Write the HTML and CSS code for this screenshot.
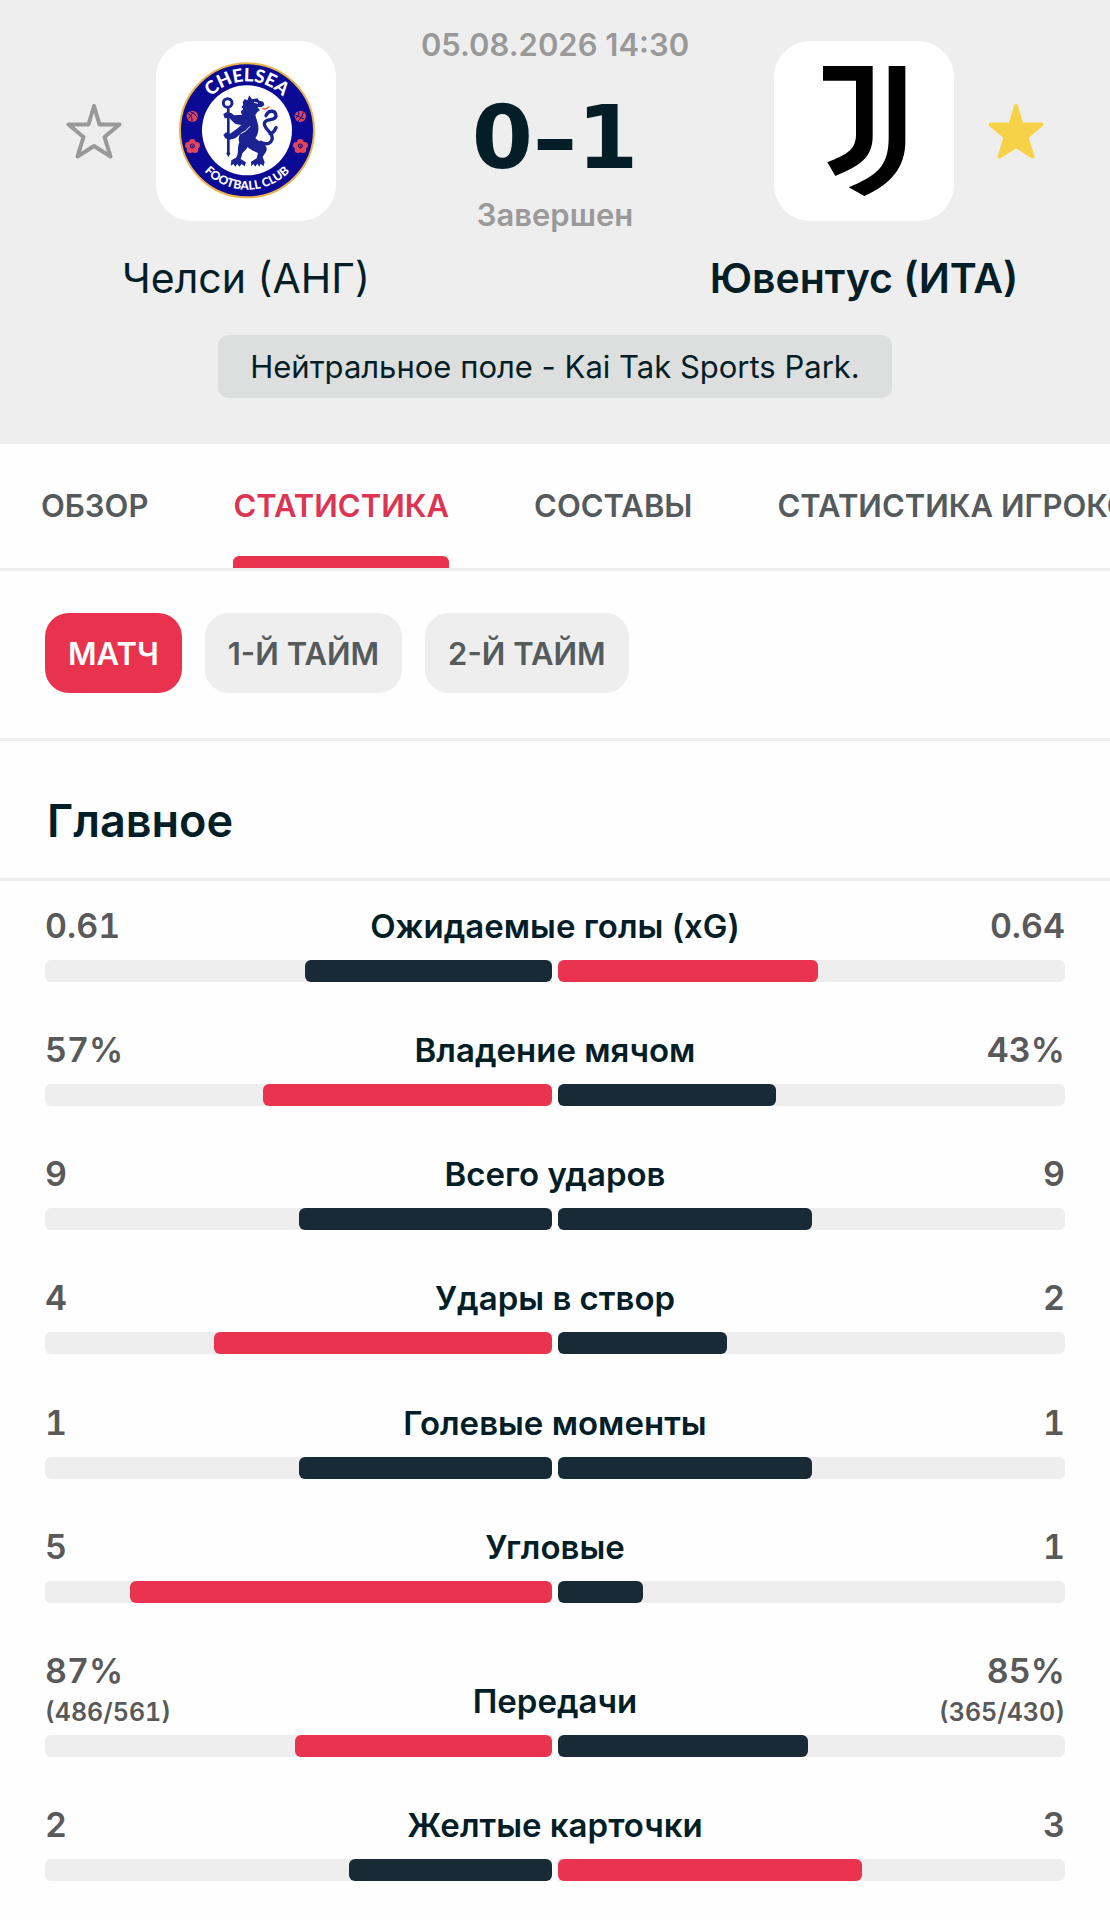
FILE: index.html
```html
<!DOCTYPE html>
<html lang="ru">
<head>
  <meta charset="UTF-8">
  <meta name="viewport" content="width=device-width, initial-scale=1.0">
  <title>Челси - Ювентус 0-1</title>
  <link rel="stylesheet" href="styles.css">
</head>
<body>
  <header class="match">
    <div class="match-row">
      <div class="team">
        <button class="star" type="button" aria-label="Добавить Челси в избранное">
          <svg viewBox="0 0 56 56"><path d="M28 3L33.5 21.5H53.5L38.5 34L44.5 53.5L28 43L11.5 53.5L17.5 34L2.5 21.5H22.5Z"/></svg>
        </button>
        <div class="logo">
          <svg viewBox="0 0 180 180">
            <defs>
              <path id="arc-top" d="M84 226A147 147 0 0 1 378 226"/>
              <path id="arc-bottom" d="M53 226A178 178 0 0 0 409 226"/>
            </defs>
            <g transform="translate(14 14) scale(.3333)">
              <circle cx="231" cy="226" r="201" fill="#0a0a94" stroke="#eab14d" stroke-width="6"/>
              <circle cx="231" cy="226" r="135" fill="#fff"/>
              <text class="crest-top"><textPath href="#arc-top" startOffset="50%">CHELSEA</textPath></text>
              <text class="crest-bottom"><textPath href="#arc-bottom" startOffset="50%">FOOTBALL CLUB</textPath></text>
              <!-- розы и мячи -->
              <g fill="#e0455c">
                <circle cx="67" cy="184" r="17"/>
                <circle cx="391" cy="184" r="17"/>
                <circle cx="67" cy="262" r="10"/><circle cx="80" cy="271" r="10"/><circle cx="75" cy="284" r="10"/><circle cx="60" cy="284" r="10"/><circle cx="55" cy="271" r="10"/>
                <circle cx="391" cy="262" r="10"/><circle cx="404" cy="271" r="10"/><circle cx="399" cy="284" r="10"/><circle cx="384" cy="284" r="10"/><circle cx="379" cy="271" r="10"/>
              </g>
              <g fill="none" stroke="#0a0a94" stroke-width="3">
                <path d="M54 176Q68 182 66 200M60 170Q76 174 82 188M56 190L70 172M378 190Q390 180 386 168M384 198Q398 188 400 172M376 180L402 192"/>
                <circle cx="67" cy="273" r="6"/>
                <circle cx="391" cy="273" r="6"/>
              </g>
              <!-- лев с посохом -->
              <g fill="#1a2391">
                <path d="M218 142L224 132L232 136L238 121L246 133L262 130L268 137L280 140L283 150L274 157L262 156L270 166L262 171L256 180L262 200C268 220 266 235 256 250L272 262C288 268 294 280 288 290L278 306L284 322L280 334L272 326L268 335L262 326L256 335L250 327L244 334L243 320L260 310L264 294L246 286L232 276C228 288 216 292 216 300L212 312L228 322L224 334L215 327L208 335L202 327L196 335L190 327L182 333L184 316L198 308C208 296 200 280 208 262C204 254 206 246 210 238L196 250L176 255L166 250L160 240L168 232L180 236L200 222L214 210L196 207L184 196L178 188L164 190L160 178L168 172L184 174L192 181L204 180L216 180L212 170L220 162L214 156L220 150Z"/>
                <path d="M171 160H179V290L181 296L175 306L169 296L171 290Z"/>
              </g>
              <path d="M272 262C300 275 312 255 304 238C298 228 278 215 284 202C292 188 312 200 318 184C318 164 296 164 288 182M300 236Q312 234 318 218" fill="none" stroke="#1a2391" stroke-width="10" stroke-linecap="round"/>
              <circle cx="173" cy="144" r="13" fill="none" stroke="#1a2391" stroke-width="9"/>
              <path d="M277 160Q288 166 298 154" fill="none" stroke="#e0552f" stroke-width="4"/>
              <path d="M252 142L264 145M212 236Q228 230 240 214" fill="none" stroke="#fff" stroke-width="3"/>
            </g>
          </svg>
        </div>
        <div class="team-name">Челси (АНГ)</div>
      </div>
      <div class="score-box">
        <div class="muted">05.08.2026 14:30</div>
        <div class="score">0–1</div>
        <div class="muted">Завершен</div>
      </div>
      <div class="team">
        <button class="star active" type="button" aria-label="Убрать Ювентус из избранного">
          <svg viewBox="0 0 56 56"><path d="M28 3L33.5 21.5H53.5L38.5 34L44.5 53.5L28 43L11.5 53.5L17.5 34L2.5 21.5H22.5Z"/></svg>
        </button>
        <div class="logo">
          <svg viewBox="0 0 540 540">
            <path d="M147 75H296V285C296 350 258 374 184 405L160 364C220 340 246 326 246 280V119H147Z"/>
            <path d="M344 75H394V300C394 380 352 428 271 465L224 439C304 404 344 380 344 290Z"/>
          </svg>
        </div>
        <div class="team-name winner">Ювентус (ИТА)</div>
      </div>
    </div>
    <p class="venue">Нейтральное поле - Kai Tak Sports Park.</p>
  </header>

  <nav class="tabs">
    <a href="#overview">ОБЗОР</a>
    <a href="#stats" class="active">СТАТИСТИКА</a>
    <a href="#lineups">СОСТАВЫ</a>
    <a href="#players">СТАТИСТИКА ИГРОКОВ</a>
  </nav>

  <div class="periods">
    <button type="button" class="active">МАТЧ</button>
    <button type="button">1-Й ТАЙМ</button>
    <button type="button">2-Й ТАЙМ</button>
  </div>

  <h2 class="section-title">Главное</h2>

  <main class="stats" id="stats">
    <div class="stat">
      <div class="stat-text"><div class="value">0.61</div><div class="label">Ожидаемые голы (xG)</div><div class="value">0.64</div></div>
      <div class="bars">
        <div class="bar home"><span style="width: 48.8%"></span></div>
        <div class="bar"><span class="best" style="width: 51.2%"></span></div>
      </div>
    </div>
    <div class="stat">
      <div class="stat-text"><div class="value">57%</div><div class="label">Владение мячом</div><div class="value">43%</div></div>
      <div class="bars">
        <div class="bar home"><span class="best" style="width: 57%"></span></div>
        <div class="bar"><span style="width: 43%"></span></div>
      </div>
    </div>
    <div class="stat">
      <div class="stat-text"><div class="value">9</div><div class="label">Всего ударов</div><div class="value">9</div></div>
      <div class="bars">
        <div class="bar home"><span style="width: 50%"></span></div>
        <div class="bar"><span style="width: 50%"></span></div>
      </div>
    </div>
    <div class="stat">
      <div class="stat-text"><div class="value">4</div><div class="label">Удары в створ</div><div class="value">2</div></div>
      <div class="bars">
        <div class="bar home"><span class="best" style="width: 66.7%"></span></div>
        <div class="bar"><span style="width: 33.3%"></span></div>
      </div>
    </div>
    <div class="stat">
      <div class="stat-text"><div class="value">1</div><div class="label">Голевые моменты</div><div class="value">1</div></div>
      <div class="bars">
        <div class="bar home"><span style="width: 50%"></span></div>
        <div class="bar"><span style="width: 50%"></span></div>
      </div>
    </div>
    <div class="stat">
      <div class="stat-text"><div class="value">5</div><div class="label">Угловые</div><div class="value">1</div></div>
      <div class="bars">
        <div class="bar home"><span class="best" style="width: 83.3%"></span></div>
        <div class="bar"><span style="width: 16.7%"></span></div>
      </div>
    </div>
    <div class="stat">
      <div class="stat-text"><div class="value">87%<small>(486/561)</small></div><div class="label">Передачи</div><div class="value">85%<small>(365/430)</small></div></div>
      <div class="bars">
        <div class="bar home"><span class="best" style="width: 50.6%"></span></div>
        <div class="bar"><span style="width: 49.4%"></span></div>
      </div>
    </div>
    <div class="stat">
      <div class="stat-text"><div class="value">2</div><div class="label">Желтые карточки</div><div class="value">3</div></div>
      <div class="bars">
        <div class="bar home"><span style="width: 40%"></span></div>
        <div class="bar"><span class="best" style="width: 60%"></span></div>
      </div>
    </div>
  </main>
</body>
</html>
```

FILE: styles.css
```css
* {
  box-sizing: border-box;
}
body {
  margin: 0;
  min-height: 100vh;
  display: flex;
  flex-direction: column;
  font-family: Inter, "Liberation Sans", sans-serif;
  color: #041e28;
  background-color: #fefefe;
}
button {
  font-family: inherit;
  border: none;
  cursor: pointer;
}

/* шапка матча */
.match {
  background-color: #eeeeee;
  padding: 24px 66px 46px;
}
.match-row {
  display: flex;
  justify-content: space-between;
}
.team {
  width: 360px;
  flex-shrink: 0;
  padding-top: 17px;
  display: grid;
  grid-template-columns: 56px 180px 56px;
  justify-content: space-between;
  align-items: center;
  row-gap: 33px;
}
.logo {
  grid-column: 2;
  grid-row: 1;
  height: 180px;
  background-color: #ffffff;
  border-radius: 36px;
}
.logo svg {
  display: block;
  width: 100%;
}
.crest-top,
.crest-bottom {
  font-family: Lato, sans-serif;
  font-weight: 900;
  fill: #ffffff;
  text-anchor: middle;
}
.crest-top {
  font-size: 55px;
}
.crest-bottom {
  font-size: 36px;
}
.star {
  grid-column: 1;
  grid-row: 1;
  padding: 0;
  height: 56px;
  background: none;
}
.star.active {
  grid-column: 3;
}
.star svg {
  display: block;
  width: 56px;
  height: 56px;
  fill: none;
  stroke: #999999;
  stroke-width: 4px;
  stroke-linejoin: round;
}
.star.active svg {
  fill: #f7d147;
  stroke: #f7d147;
}
.team-name {
  grid-column: 1 / -1;
  font-size: 41px;
  line-height: 48px;
  text-align: center;
  white-space: nowrap;
}
.winner {
  font-weight: 600;
}
.score-box {
  flex: 1;
  min-width: 0;
  display: flex;
  flex-direction: column;
  align-items: center;
  white-space: nowrap;
}
.muted {
  font-size: 31px;
  font-weight: 600;
  line-height: 42px;
  color: #999999;
}
.score {
  margin-top: 16px;
  font-family: "DejaVu Sans", sans-serif;
  font-size: 88px;
  font-weight: 700;
  line-height: 112px;
}
.venue {
  width: fit-content;
  margin: 33px auto 0;
  padding: 0 32px;
  font-size: 31px;
  line-height: 63px;
  border-radius: 10px;
  background-color: #dcdfde;
}

/* вкладки */
.tabs {
  display: flex;
  gap: 85px;
  padding: 0 41px;
  border-bottom: 3px solid #eeeeee;
  overflow: hidden;
  white-space: nowrap;
}
.tabs a {
  height: 124px;
  font-size: 31px;
  font-weight: 600;
  line-height: 124px;
  color: #555a5c;
  text-decoration: none;
}
.tabs a.active {
  color: #dc3553;
}
.tabs a.active::after {
  content: "";
  display: block;
  height: 12px;
  margin-top: -12px;
  border-radius: 6px 6px 0 0;
  background-color: #e9324e;
}
.periods {
  display: flex;
  gap: 23px;
  padding: 42px 45px 45px;
  border-bottom: 3px solid #eeeeee;
}
.periods button {
  height: 80px;
  padding: 0 23px;
  font-size: 31px;
  font-weight: 600;
  color: #555a5c;
  background-color: #eeeeee;
  border-radius: 24px;
}
.periods button.active {
  color: #ffffff;
  background-color: #e9324e;
}
.section-title {
  margin: 0;
  padding: 48px 47px 25px;
  font-size: 45px;
  font-weight: 600;
  line-height: 64px;
  border-bottom: 3px solid #eeeeee;
}

/* статистика */
.stats {
  flex: 1;
  display: flex;
  flex-direction: column;
  justify-content: space-between;
  gap: 20px;
  padding: 22px 45px 39px;
}
.stat-text {
  display: grid;
  grid-template-columns: 1fr auto 1fr;
  align-items: end;
  padding-bottom: 11px;
}
.value {
  font-size: 34px;
  font-weight: 600;
  font-variant-numeric: tabular-nums;
  line-height: 46px;
  color: #595959;
}
.value:last-child {
  text-align: right;
}
.value small {
  display: block;
  margin-bottom: -6px;
  font-size: 25px;
  line-height: 36px;
}
.label {
  font-size: 33px;
  font-weight: 600;
  line-height: 46px;
}
.bars {
  display: grid;
  grid-template-columns: 1fr 1fr;
  gap: 6px;
}
.bar {
  display: flex;
  height: 22px;
  background-color: #eeeeee;
  border-radius: 0 6px 6px 0;
}
.bar.home {
  justify-content: flex-end;
  border-radius: 6px 0 0 6px;
}
.bar span {
  background-color: #182a35;
  border-radius: 6px;
}
.bar .best {
  background-color: #ea334f;
}
```
